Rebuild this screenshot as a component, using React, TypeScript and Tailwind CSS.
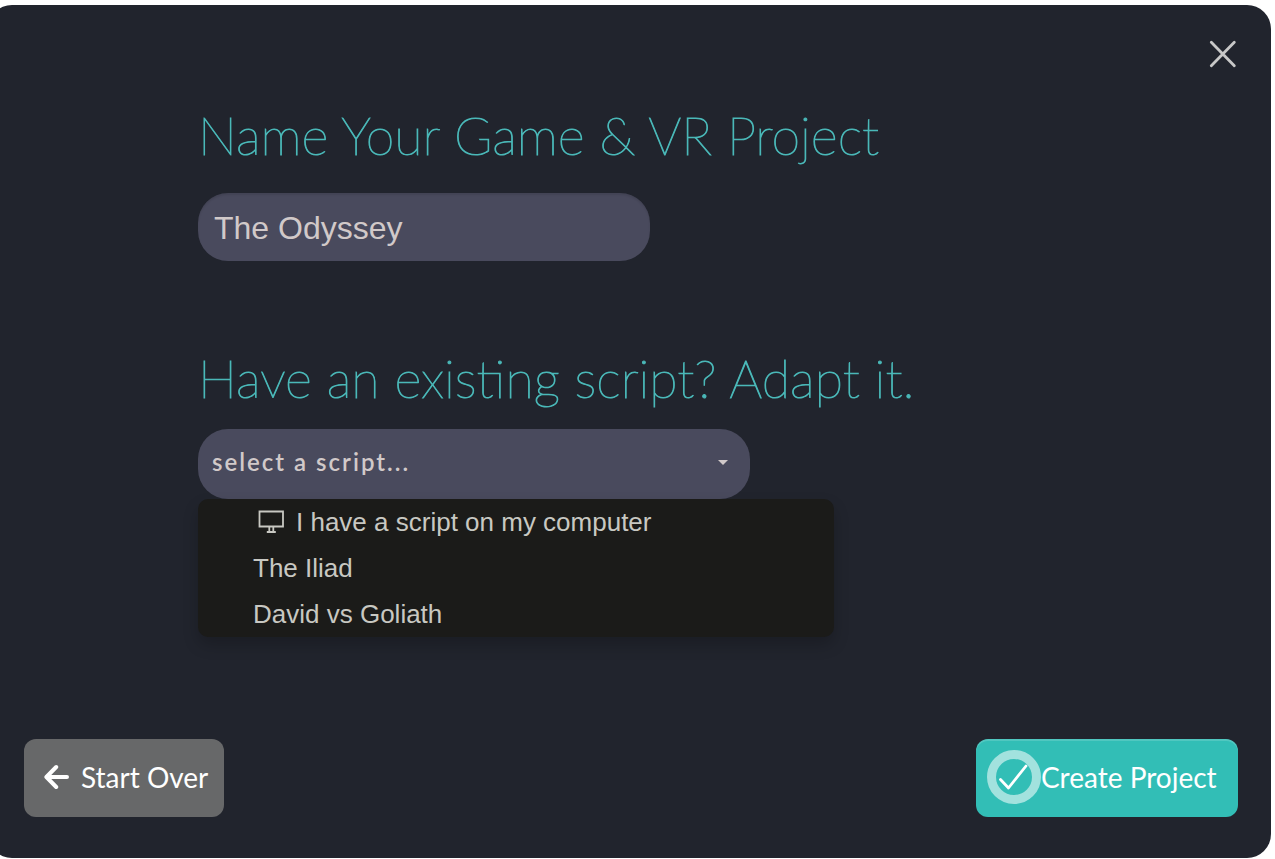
import { useState } from "react";

const scripts = ["The Iliad", "David vs Goliath"];

function CloseIcon() {
  return (
    <svg viewBox="0 0 28 28" className="size-7" fill="none" stroke="currentColor" strokeWidth="2.8" strokeLinecap="round" aria-hidden="true">
      <path d="M2.3 2.3L25.3 25.7M25.3 2.3L2.3 25.7" />
    </svg>
  );
}

function MonitorIcon() {
  return (
    <svg viewBox="0 0 26 24" className="h-6 w-[26px]" fill="none" stroke="currentColor" strokeWidth="1.8" aria-hidden="true">
      <path d="M1.5 1.5H25V16.5H1.5ZM11.3 16.5V22M15.3 16.5V22M8.8 22H17.8" />
    </svg>
  );
}

function ArrowLeftIcon() {
  return (
    <svg viewBox="0 0 26 26" className="size-[26px]" fill="none" stroke="currentColor" strokeWidth="4" strokeLinecap="round" strokeLinejoin="round" aria-hidden="true">
      <path d="M12.2 3L2.4 13L12.2 23M3 13H23" />
    </svg>
  );
}

function CheckRingIcon() {
  return (
    <svg viewBox="0 0 54 54" className="size-[54px]" fill="none" aria-hidden="true">
      <circle cx="27" cy="27" r="22.5" stroke="#fff" strokeOpacity="0.55" strokeWidth="9" />
      <path d="M13.5 29.5L21.5 38L39 16" stroke="#fff" strokeWidth="2.8" strokeLinecap="round" strokeLinejoin="round" />
    </svg>
  );
}

export default function App() {
  const [name, setName] = useState("The Odyssey");
  const [open, setOpen] = useState(true);
  const [script, setScript] = useState("select a script...");

  const choose = (value: string) => {
    setScript(value);
    setOpen(false);
  };

  return (
    <main className="flex min-h-screen flex-col overflow-hidden bg-white pt-[5px] pb-px pr-1 font-['Lato',sans-serif]">
      <section className="-ml-3 flex flex-1 flex-col rounded-3xl bg-[#21242d] pb-[41px] pl-9 pr-[33px] pt-[35px]">
        <header className="flex justify-end">
          <button type="button" aria-label="Close" className="mr-px text-[#c8c8c8]">
            <CloseIcon />
          </button>
        </header>

        <form className="flex flex-1 flex-col" onSubmit={(e) => e.preventDefault()}>
          <div className="flex flex-1 flex-col items-start pl-[174px] pt-[35px]">
            <label htmlFor="project-name" className="text-[52px] leading-16 font-thin text-[#4ab8b8] [-webkit-text-stroke:1px_#4ab8b8]">
              Name Your Game &amp; VR Project
            </label>
            <input
              id="project-name"
              value={name}
              onChange={(e) => setName(e.target.value)}
              className="mt-[26px] h-[68px] w-[452px] rounded-[30px] bg-[#494a5d] px-4 pt-0.5 font-['Liberation_Sans',sans-serif] text-[32px] text-[#d1c9c9] shadow-[inset_0_2px_2px_rgba(0,0,0,0.1)] outline-none"
            />

            <h2 id="script-heading" className="mt-[85px] text-[52px] leading-16 font-thin text-[#4ab8b8] [-webkit-text-stroke:1px_#4ab8b8]">
              Have an existing script? Adapt it.
            </h2>
            <div className="relative mt-[19px]">
              <button
                type="button"
                aria-haspopup="menu"
                aria-expanded={open}
                aria-labelledby="script-heading script-value"
                onClick={() => setOpen(!open)}
                className="flex h-[70px] w-[552px] items-center justify-between rounded-[30px] bg-[#494a5d] pb-1 pl-[14px] pr-[22px] text-2xl font-semibold tracking-[2px] text-[#d1c9c9]"
              >
                <span id="script-value">{script}</span>
                <svg viewBox="0 0 10 5" className="h-[5px] w-[10px]" fill="currentColor" aria-hidden="true">
                  <path d="M0 0H10L5 5Z" />
                </svg>
              </button>
              {open && (
                <ul
                  role="menu"
                  className="absolute left-0 top-full w-[636px] rounded-[10px] bg-[#1b1b19] font-['Liberation_Sans',sans-serif] text-[26px] leading-[46px] text-[#c8c8c2] shadow-[0_8px_16px_rgba(0,0,0,0.2)]"
                >
                  <li role="none">
                    <button
                      type="button"
                      role="menuitem"
                      onClick={() => choose("I have a script on my computer")}
                      className="flex w-full items-center gap-3 pl-[60px] text-left"
                    >
                      <MonitorIcon />
                      I have a script on my computer
                    </button>
                  </li>
                  {scripts.map((item) => (
                    <li key={item} role="none">
                      <button
                        type="button"
                        role="menuitem"
                        onClick={() => choose(item)}
                        className="block w-full pl-[55px] text-left"
                      >
                        {item}
                      </button>
                    </li>
                  ))}
                </ul>
              )}
            </div>
          </div>

          <footer className="flex items-center justify-between text-[28px] text-white">
            <button type="button" className="flex h-[78px] w-[200px] items-center gap-[11px] rounded-xl bg-[#676869] pb-0.5 pl-5">
              <ArrowLeftIcon />
              Start Over
            </button>
            <button
              type="submit"
              className="flex h-[78px] w-[262px] items-center rounded-xl bg-[#32beb6] pb-0.5 pl-[11px] shadow-[inset_0_2px_0_rgba(255,255,255,0.15)]"
            >
              <CheckRingIcon />
              Create Project
            </button>
          </footer>
        </form>
      </section>
    </main>
  );
}
